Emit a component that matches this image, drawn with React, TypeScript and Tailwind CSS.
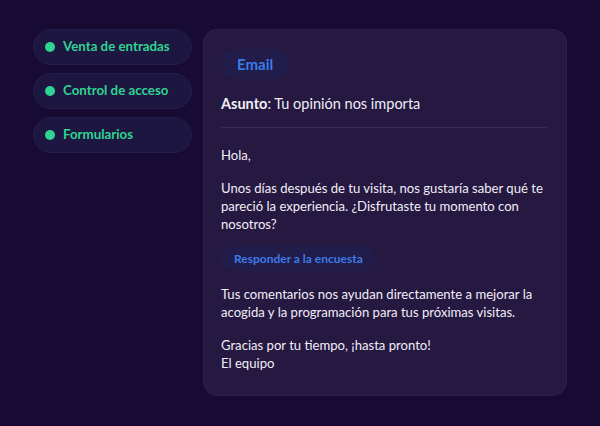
import React from "react";

const items = ["Venta de entradas", "Control de acceso", "Formularios"];

export default function App() {
  return (
    <div
      className="w-[600px] h-[426px] bg-[#170b33] flex gap-[11px] px-[33px] pt-[29px] pb-[30px] text-white"
      style={{ fontFamily: "Lato, 'Noto Sans', sans-serif" }}
    >
      <div className="flex flex-col gap-[8px] w-[159px] shrink-0">
        {items.map((t) => (
          <div
            key={t}
            className="h-[36px] rounded-full bg-[#1d1640] border border-[#241e4c] flex items-center pl-[11px] gap-[8px]"
          >
            <span className="w-[10px] h-[10px] rounded-full bg-[#2fd392]" />
            <span className="text-[13.3px] font-bold text-[#2fd392]">{t}</span>
          </div>
        ))}
      </div>
      <div className="flex-1 rounded-[14px] bg-[#251841] border border-[#2c1f4b] px-[17px] pt-[19px] text-[13.1px] leading-[18px] text-[#f1eef7]">
        <div className="inline-flex h-[30px] px-[16px] items-center rounded-full bg-[#211c4a] text-[#3b7be8] font-bold text-[15px]">
          Email
        </div>
        <div className="mt-[16px] text-[14.5px]">
          <span className="font-bold">Asunto</span>: Tu opinión nos importa
        </div>
        <div className="mt-[14px] h-[1px] bg-[#3a2d5a] mr-[2px]" />
        <div className="mt-[18px]">Hola,</div>
        <div className="mt-[15px]">
          Unos días después de tu visita, nos gustaría saber qué te pareció la experiencia. ¿Disfrutaste tu momento con nosotros?
        </div>
        <div className="mt-[13px] inline-flex h-[25px] px-[13px] items-center rounded-full bg-[#221c4a] text-[#3b7be8] font-bold text-[12px]">
          Responder a la encuesta
        </div>
        <div className="mt-[14px]">
          Tus comentarios nos ayudan directamente a mejorar la acogida y la programación para tus próximas visitas.
        </div>
        <div className="mt-[15px]">
          Gracias por tu tiempo, ¡hasta pronto!
          <br />
          El equipo
        </div>
      </div>
    </div>
  );
}
